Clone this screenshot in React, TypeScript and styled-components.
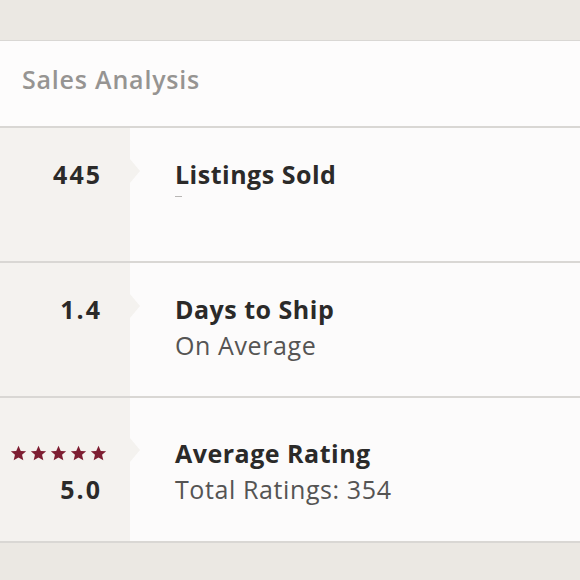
import React from 'react';
import styled, { createGlobalStyle } from 'styled-components';

const GlobalStyle = createGlobalStyle`
  html, body {
    margin: 0;
    padding: 0;
    background: #ebe8e3;
    font-family: "Open Sans", Lato, sans-serif;
  }
`;

const Page = styled.div`
  width: 580px;
  height: 580px;
  padding-top: 40px;
  box-sizing: border-box;
  background: #ebe8e3;
`;

const Card = styled.section`
  border-top: 1px solid #d9d7d4;
  border-bottom: 2px solid #d9d7d4;
  background: #fcfbfb;
`;

const Header = styled.header`
  height: 87px;
  display: flex;
  align-items: center;
  padding: 0 0 10px 22px;
  box-sizing: border-box;
  border-bottom: 2px solid #d9d7d4;
  background: #fdfcfc;
`;

const HeaderTitle = styled.h2`
  margin: 0;
  font-size: 25px;
  font-weight: 600;
  letter-spacing: 0.8px;
  color: #969492;
`;

const Row = styled.div<{ $height: number; $top: number; $last?: boolean }>`
  display: grid;
  grid-template-columns: 130px 1fr;
  height: ${p => p.$height}px;
  border-bottom: ${p => (p.$last ? 'none' : '2px solid #d9d7d4')};
  --top: ${p => p.$top}px;
`;

const Side = styled.div`
  position: relative;
  background: #f4f2ef;
  padding: var(--top) 28px 0 0;
  display: flex;
  flex-direction: column;
  align-items: flex-end;

  &::after {
    content: '';
    position: absolute;
    right: -10px;
    top: calc(var(--top) + 3px);
    border-top: 12px solid transparent;
    border-bottom: 12px solid transparent;
    border-left: 10px solid #f4f2ef;
  }
`;

const Value = styled.div`
  font-size: 25px;
  font-weight: 700;
  line-height: 36px;
  letter-spacing: 2px;
  color: #2b2a29;
`;

const Stars = styled.div`
  display: flex;
  gap: 3px;
  height: 36px;
  align-items: center;
  margin-right: -5px;
`;

const Body = styled.div`
  padding: var(--top) 0 0 45px;
`;

const Title = styled.div`
  font-size: 25px;
  font-weight: 700;
  line-height: 36px;
  letter-spacing: 0.5px;
  color: #2b2a29;
`;

const Sub = styled.div`
  font-size: 25px;
  font-weight: 400;
  line-height: 36px;
  letter-spacing: 0.6px;
  color: #555453;
`;

const Dash = styled.span`
  display: inline-block;
  width: 7px;
  height: 1px;
  background: #b8b6b4;
  vertical-align: top;
  margin-top: 4px;
`;

const Star = () => (
  <svg width="17" height="17" viewBox="0 0 24 24">
    <path
      d="M12 1.2l3.2 7.1 7.6.6-5.8 5 1.8 7.6L12 17.5l-6.8 4 1.8-7.6-5.8-5 7.6-.6z"
      fill="#7e1f33"
    />
  </svg>
);

export default function App() {
  return (
    <Page>
      <GlobalStyle />
      <Card>
        <Header>
          <HeaderTitle>Sales Analysis</HeaderTitle>
        </Header>
        <Row $height={133} $top={28}>
          <Side>
            <Value>445</Value>
          </Side>
          <Body>
            <Title>Listings Sold</Title>
            <Sub>
              <Dash />
            </Sub>
          </Body>
        </Row>
        <Row $height={133} $top={28}>
          <Side>
            <Value>1.4</Value>
          </Side>
          <Body>
            <Title>Days to Ship</Title>
            <Sub>On Average</Sub>
          </Body>
        </Row>
        <Row $height={143} $top={37} $last>
          <Side>
            <Stars>
              {[0, 1, 2, 3, 4].map(i => (
                <Star key={i} />
              ))}
            </Stars>
            <Value>5.0</Value>
          </Side>
          <Body>
            <Title>Average Rating</Title>
            <Sub>Total Ratings: 354</Sub>
          </Body>
        </Row>
      </Card>
    </Page>
  );
}
